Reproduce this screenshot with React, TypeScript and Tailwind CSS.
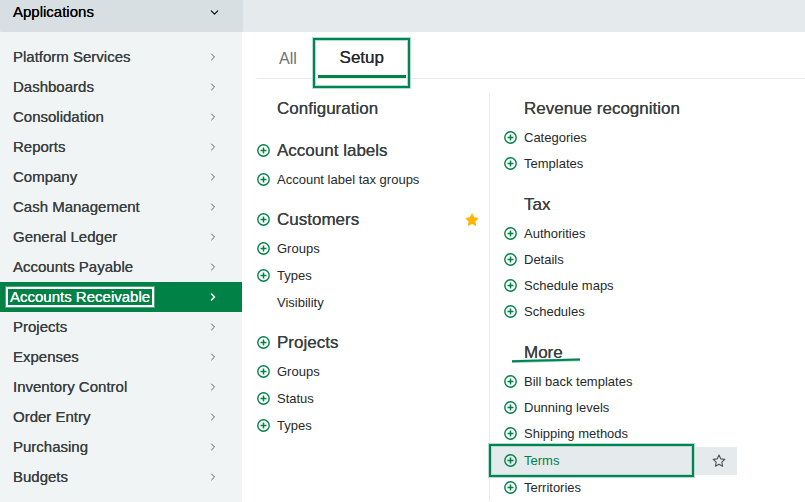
import { ChevronDown, ChevronRight } from "lucide-react";
import clsx from "clsx";

type Entry = {
  label: string;
  noAdd?: boolean;
  selected?: boolean;
};

type Section = {
  title: string;
  canAdd?: boolean;
  favorite?: boolean;
  marked?: boolean;
  items: Entry[];
};

const applications = [
  "Platform Services",
  "Dashboards",
  "Consolidation",
  "Reports",
  "Company",
  "Cash Management",
  "General Ledger",
  "Accounts Payable",
  "Accounts Receivable",
  "Projects",
  "Expenses",
  "Inventory Control",
  "Order Entry",
  "Purchasing",
  "Budgets",
];

const leftSections: Section[] = [
  { title: "Configuration", items: [] },
  { title: "Account labels", canAdd: true, items: [{ label: "Account label tax groups" }] },
  {
    title: "Customers",
    canAdd: true,
    favorite: true,
    items: [{ label: "Groups" }, { label: "Types" }, { label: "Visibility", noAdd: true }],
  },
  {
    title: "Projects",
    canAdd: true,
    items: [{ label: "Groups" }, { label: "Status" }, { label: "Types" }],
  },
];

const rightSections: Section[] = [
  { title: "Revenue recognition", items: [{ label: "Categories" }, { label: "Templates" }] },
  {
    title: "Tax",
    items: [
      { label: "Authorities" },
      { label: "Details" },
      { label: "Schedule maps" },
      { label: "Schedules" },
    ],
  },
  {
    title: "More",
    marked: true,
    items: [
      { label: "Bill back templates" },
      { label: "Dunning levels" },
      { label: "Shipping methods" },
      { label: "Terms", selected: true },
      { label: "Territories" },
    ],
  },
];

const AddButton = ({ label }: { label: string }) => (
  <button type="button" aria-label={`Add ${label}`} className="size-[14px] shrink-0 text-[#008146]">
    <svg viewBox="0 0 14 14" className="size-[14px]" fill="none" stroke="currentColor">
      <circle cx="6.5" cy="6.5" r="5.7" strokeWidth="1.4" />
      <path d="M6.5 3.5v6M3.5 6.5h6" strokeWidth="1.5" />
    </svg>
  </button>
);

const Star = ({ filled }: { filled?: boolean }) => (
  <svg
    viewBox="0 0 14 14"
    className={clsx("size-[14px]", filled ? "text-[#ffb500]" : "text-[#4d5458]")}
    fill={filled ? "currentColor" : "none"}
    stroke="currentColor"
    strokeWidth="1.1"
    strokeLinejoin="round"
  >
    <path d="M7 1.1l1.75 3.75 4.1.5-3.05 2.8.8 4.1L7 10.2l-3.6 2.05.8-4.1-3.05-2.8 4.1-.5z" />
  </svg>
);

type SectionBlockProps = {
  section: Section;
  headClass: string;
  rowClass: string;
};

const SectionBlock = ({ section, headClass, rowClass }: SectionBlockProps) => (
  <section>
    <div className={clsx("flex items-center gap-[6px]", headClass)}>
      {section.canAdd ? <AddButton label={section.title} /> : <span className="w-[14px]" />}
      <h2 className="relative text-[17px] leading-6 text-[#3a3f42] [text-shadow:0_0_0_currentColor]">
        {section.title}
        {section.marked && (
          <svg viewBox="0 0 68 5" className="absolute -left-3 top-[17px] h-[5px] w-[68px] max-w-none">
            <path d="M0 3.5L68 1.8" stroke="#9ed3bb" strokeWidth="3" />
            <path d="M0 3.2L68 1.5" stroke="#008457" strokeWidth="2" />
          </svg>
        )}
      </h2>
      {section.favorite && (
        <button type="button" aria-label="Remove favorite" className="ml-auto mr-[10px]">
          <Star filled />
        </button>
      )}
    </div>
    <ul>
      {section.items.map((item) => (
        <li
          key={item.label}
          className={clsx(
            "relative flex items-center gap-[6px]",
            item.selected ? "-ml-[14px] h-7 bg-[#e5eaec] pl-[14px]" : rowClass
          )}
        >
          {item.noAdd ? <span className="w-[14px]" /> : <AddButton label={item.label} />}
          <a
            href="#"
            className={clsx("text-[13px] leading-5", item.selected ? "text-[#008146]" : "text-[#262a2c]")}
          >
            {item.label}
          </a>
          {item.selected && (
            <>
              <button type="button" aria-label="Add favorite" className="ml-auto mr-[11px]">
                <Star />
              </button>
              <span className="pointer-events-none absolute -bottom-[2px] -left-px -top-[3px] right-[43px] border-2 border-[#008457] shadow-[0_0_0_1px_#b5ddca,inset_0_0_0_1px_#b5ddca]" />
            </>
          )}
        </li>
      ))}
    </ul>
  </section>
);

const Sidebar = () => (
  <nav aria-label="Applications" className="w-[242px] shrink-0 bg-[#f0f4f5] py-[10px]">
    <ul>
      {applications.map((name) => {
        const active = name === "Accounts Receivable";
        return (
          <li key={name}>
            <a
              href="#"
              className={clsx(
                "flex h-[30px] items-center justify-between pr-[23px] text-[15px] leading-5 [text-shadow:0_0_0_currentColor]",
                active ? "bg-[#008146] pl-[6px] text-white" : "pl-[13px] text-[#3a3f42]"
              )}
            >
              {active ? (
                <span className="border-2 border-white px-[2px] leading-4 shadow-[0_0_0_1px_#4fa67f]">{name}</span>
              ) : (
                <span>{name}</span>
              )}
              <ChevronRight size={12} strokeWidth={active ? 3 : 2} className={active ? "text-white" : "text-[#5d6569]"} />
            </a>
          </li>
        );
      })}
    </ul>
  </nav>
);

export default function App() {
  return (
    <div className="flex min-h-screen flex-col bg-white font-['Liberation_Sans',Arial,sans-serif]">
      <header className="flex h-8 bg-[#e5eaec]">
        <button
          type="button"
          className="flex w-[243px] items-center justify-between rounded-b-xs bg-[#d8dfe2] pb-[7px] pl-[13px] pr-[22px] text-[15px] text-black [text-shadow:0_0_0_currentColor]"
        >
          Applications
          <ChevronDown size={13} strokeWidth={2} />
        </button>
      </header>
      <div className="flex flex-1">
        <Sidebar />
        <main className="min-w-0 flex-1 pl-[15px]">
          <div role="tablist" className="flex h-[47px] border-b border-[#e8ebec]">
            <button type="button" role="tab" aria-selected="false" className="pl-[22px] pr-[21px] pt-2 text-[16px] text-[#6b7276]">
              All
            </button>
            <button
              type="button"
              role="tab"
              aria-selected="true"
              className="relative w-[88px] border-b-[3px] border-[#008146] pt-2 text-[17px] text-[#262a2c] [text-shadow:0_0_0_currentColor]"
            >
              Setup
              <span className="pointer-events-none absolute -bottom-[13px] -left-[5px] -right-[4px] top-[6px] border-2 border-[#008457] shadow-[0_0_0_1px_#b5ddca,inset_0_0_0_1px_#b5ddca]" />
            </button>
          </div>
          <div className="grid max-w-[480px] grid-cols-[29fr_31fr] pt-[14px]">
            <div className="flex flex-col gap-3 pt-px">
              {leftSections.map((section) => (
                <SectionBlock key={section.title} section={section} headClass="h-[30px]" rowClass="h-[27px]" />
              ))}
            </div>
            <div className="flex flex-col gap-3 border-l border-[#e8ebec] pl-[14px]">
              {rightSections.map((section) => (
                <SectionBlock key={section.title} section={section} headClass="h-8" rowClass="h-[26px]" />
              ))}
            </div>
          </div>
        </main>
      </div>
    </div>
  );
}
